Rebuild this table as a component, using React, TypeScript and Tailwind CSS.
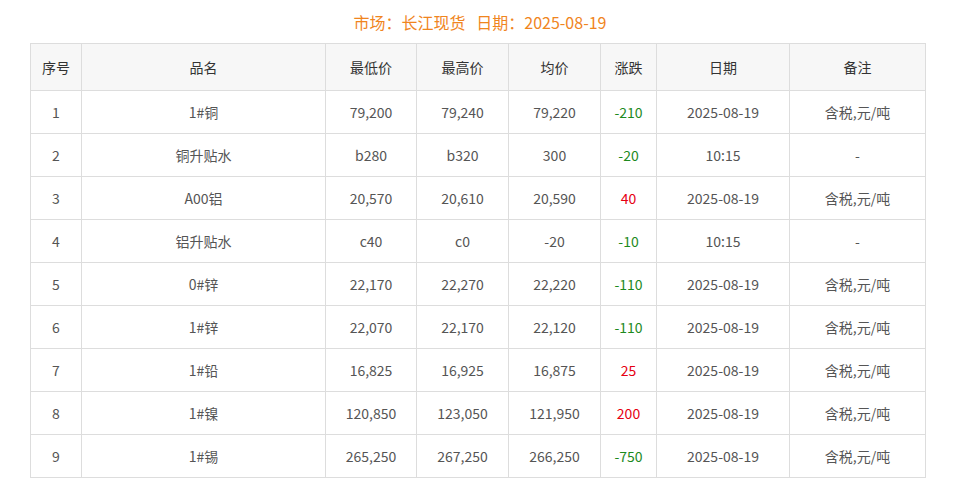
const rows = [
  { id: 1, name: '1#铜', low: '79,200', high: '79,240', avg: '79,220', chg: '-210', date: '2025-08-19', note: '含税,元/吨' },
  { id: 2, name: '铜升贴水', low: 'b280', high: 'b320', avg: '300', chg: '-20', date: '10:15', note: '-' },
  { id: 3, name: 'A00铝', low: '20,570', high: '20,610', avg: '20,590', chg: '40', date: '2025-08-19', note: '含税,元/吨' },
  { id: 4, name: '铝升贴水', low: 'c40', high: 'c0', avg: '-20', chg: '-10', date: '10:15', note: '-' },
  { id: 5, name: '0#锌', low: '22,170', high: '22,270', avg: '22,220', chg: '-110', date: '2025-08-19', note: '含税,元/吨' },
  { id: 6, name: '1#锌', low: '22,070', high: '22,170', avg: '22,120', chg: '-110', date: '2025-08-19', note: '含税,元/吨' },
  { id: 7, name: '1#铅', low: '16,825', high: '16,925', avg: '16,875', chg: '25', date: '2025-08-19', note: '含税,元/吨' },
  { id: 8, name: '1#镍', low: '120,850', high: '123,050', avg: '121,950', chg: '200', date: '2025-08-19', note: '含税,元/吨' },
  { id: 9, name: '1#锡', low: '265,250', high: '267,250', avg: '266,250', chg: '-750', date: '2025-08-19', note: '含税,元/吨' },
]

const headers = ['序号', '品名', '最低价', '最高价', '均价', '涨跌', '日期', '备注']
const widths = [51, 244, 91, 92, 92, 56, 133, 136]

export default function App() {
  return (
    <div
      className="w-[960px] h-[478px] bg-white text-[#555]"
      style={{ fontFamily: '"Noto Sans CJK SC", "Liberation Sans", sans-serif' }}
    >
      <div className="h-[43px] pt-[9px] text-center text-[16px] leading-[26px] text-[#f0851e]">
        市场：长江现货&nbsp;&nbsp;&nbsp;日期：2025-08-19
      </div>
      <table className="ml-[30px] w-[895px] table-fixed border-collapse text-[14px]">
        <colgroup>
          {widths.map((w, i) => (
            <col key={i} style={{ width: w }} />
          ))}
        </colgroup>
        <thead>
          <tr className="h-[47px] bg-[#f7f7f7]">
            {headers.map((h) => (
              <th key={h} className="border border-[#dddddd] font-normal text-[#333]">
                {h}
              </th>
            ))}
          </tr>
        </thead>
        <tbody>
          {rows.map((r) => {
            const up = !r.chg.startsWith('-')
            return (
              <tr key={r.id} className="h-[43px] text-center">
                <td className="border border-[#dddddd]">{r.id}</td>
                <td className="border border-[#dddddd]">{r.name}</td>
                <td className="border border-[#dddddd]">{r.low}</td>
                <td className="border border-[#dddddd]">{r.high}</td>
                <td className="border border-[#dddddd]">{r.avg}</td>
                <td className={`border border-[#dddddd] ${up ? 'text-[#e60012]' : 'text-[#1e8a1e]'}`}>{r.chg}</td>
                <td className="border border-[#dddddd]">{r.date}</td>
                <td className="border border-[#dddddd]">{r.note}</td>
              </tr>
            )
          })}
        </tbody>
      </table>
    </div>
  )
}
